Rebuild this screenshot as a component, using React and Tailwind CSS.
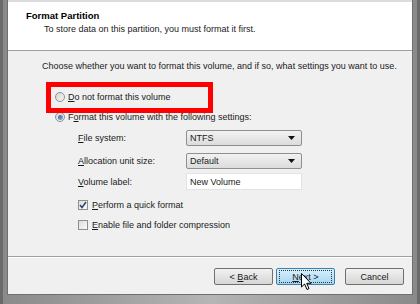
import React from "react";

const font = { fontFamily: '"Liberation Sans", Arial, sans-serif' };

const Radio = ({ checked }) => (
  <span className="flex h-[10px] w-[10px] shrink-0 items-center justify-center rounded-full border border-[#8e8f8f] bg-gradient-to-br from-[#d4d4d4] to-[#f7f7f7]">
    {checked && <span className="h-[5px] w-[5px] rounded-full bg-gradient-to-br from-[#2b5f9e] to-[#8fb5e0]" />}
  </span>
);

const Check = ({ checked }) => (
  <span className="flex h-[10px] w-[10px] shrink-0 items-center justify-center border border-[#8e8f8f] bg-gradient-to-br from-[#dcdcdc] to-[#fbfbfb]">
    {checked && (
      <svg width="8" height="8" viewBox="0 0 8 8">
        <path d="M1 4 L3 6.5 L7 1" fill="none" stroke="#2a3e6b" strokeWidth="1.4" />
      </svg>
    )}
  </span>
);

const Select = ({ value }) => (
  <div className="flex h-[16px] w-[116px] items-center justify-between rounded-[2px] border border-[#8e8f8f] bg-gradient-to-b from-[#f2f2f2] to-[#dcdcdc] pl-[3px] pr-[6px]">
    <span>{value}</span>
    <svg width="7" height="4" viewBox="0 0 7 4">
      <path d="M0 0 H7 L3.5 4 Z" fill="#111" />
    </svg>
  </div>
);

const Row = ({ label, u, children }) => (
  <div className="flex items-center">
    <span className="w-[108px]">
      <span className="underline">{u}</span>
      {label}
    </span>
    {children}
  </div>
);

const Button = ({ children, primary }) => (
  <div
    className={
      "flex h-[17px] w-[59px] items-center justify-center rounded-[2px] border " +
      (primary
        ? "border-[#3c7fb1] bg-gradient-to-b from-[#d9f0fc] to-[#a6d6f2]"
        : "border-[#707070] bg-gradient-to-b from-[#f2f2f2] to-[#d6d6d6]")
    }
  >
    {primary ? (
      <span className="flex h-[13px] w-[53px] items-center justify-center border border-dotted border-[#333]">
        <span>{children}</span>
      </span>
    ) : (
      <span>{children}</span>
    )}
  </div>
);

export default function App() {
  return (
    <div style={font} className="relative h-[304px] w-[420px] overflow-hidden bg-[#9c9c9c] text-[9px] leading-[12px] text-[#1a1a1a]">
      <div className="flex h-[304px] w-[420px] flex-col border-l-[3px] border-r-[3px] border-[#6a6a6a] bg-gradient-to-r from-[#8a8a8a] via-[#b5b5b5] to-[#8a8a8a] px-[4px] pb-[9px]">
        <div className="flex flex-1 flex-col border-b border-l border-r border-[#6f6f6f] bg-[#f0f0f0]">
          <div className="h-[51px] border-b border-t-2 border-b-[#a0a0a0] border-t-[#dcdcdc] bg-white pl-[18px] pt-[8px]">
            <div className="text-[9.5px] font-bold text-black">Format Partition</div>
            <div className="mt-[1px] pl-[18px]">To store data on this partition, you must format it first.</div>
          </div>

          <div className="relative flex flex-1 flex-col pl-[34px] pt-[9px]">
            <div>Choose whether you want to format this volume, and if so, what settings you want to use.</div>

            <div className="mt-[19px] flex items-center gap-[3px] pl-[13px]">
              <Radio />
              <span>
                <span className="underline">D</span>o not format this volume
              </span>
            </div>
            <div className="mt-[8px] flex items-center gap-[3px] pl-[13px]">
              <Radio checked />
              <span>
                F<span className="underline">o</span>rmat this volume with the following settings:
              </span>
            </div>

            <div className="mt-[7px] flex flex-col gap-[7px] pl-[36px]">
              <Row u="F" label="ile system:">
                <Select value="NTFS" />
              </Row>
              <Row u="A" label="llocation unit size:">
                <Select value="Default" />
              </Row>
            </div>
            <div className="mt-[4px] pl-[36px]">
              <Row u="V" label="olume label:">
                <div className="flex h-[17px] w-[116px] items-center border border-[#e3e3e3] bg-white pl-[3px]">New Volume</div>
              </Row>
            </div>

            <div className="mt-[9px] flex items-center gap-[4px] pl-[36px]">
              <Check checked />
              <span>
                <span className="underline">P</span>erform a quick format
              </span>
            </div>
            <div className="mt-[8px] flex items-center gap-[4px] pl-[36px]">
              <Check />
              <span>
                <span className="underline">E</span>nable file and folder compression
              </span>
            </div>

            <div className="pointer-events-none absolute left-[38px] top-[31px] h-[31px] w-[167px] border-[5px] border-[#ff0000]" />
          </div>

          <div className="border-t border-[#a0a0a0] shadow-[0_1px_0_#ffffff]" />
          <div className="flex h-[37px] items-start justify-end gap-[3px] pr-[8px] pt-[11px]">
            <Button>
              {"< "}
              <span className="underline">B</span>ack
            </Button>
            <Button primary>
              <span className="underline">N</span>
              {"ext >"}
            </Button>
            <div className="ml-[7px]">
              <Button>Cancel</Button>
            </div>
          </div>
        </div>
      </div>

      <svg className="absolute left-[301px] top-[273px]" width="12" height="18" viewBox="0 0 12 18">
        <path d="M0.5 0.5 V14 L3.6 11 L6 16.5 L8 15.6 L5.7 10.3 H10 Z" fill="#fff" stroke="#000" strokeWidth="1" />
      </svg>
    </div>
  );
}
